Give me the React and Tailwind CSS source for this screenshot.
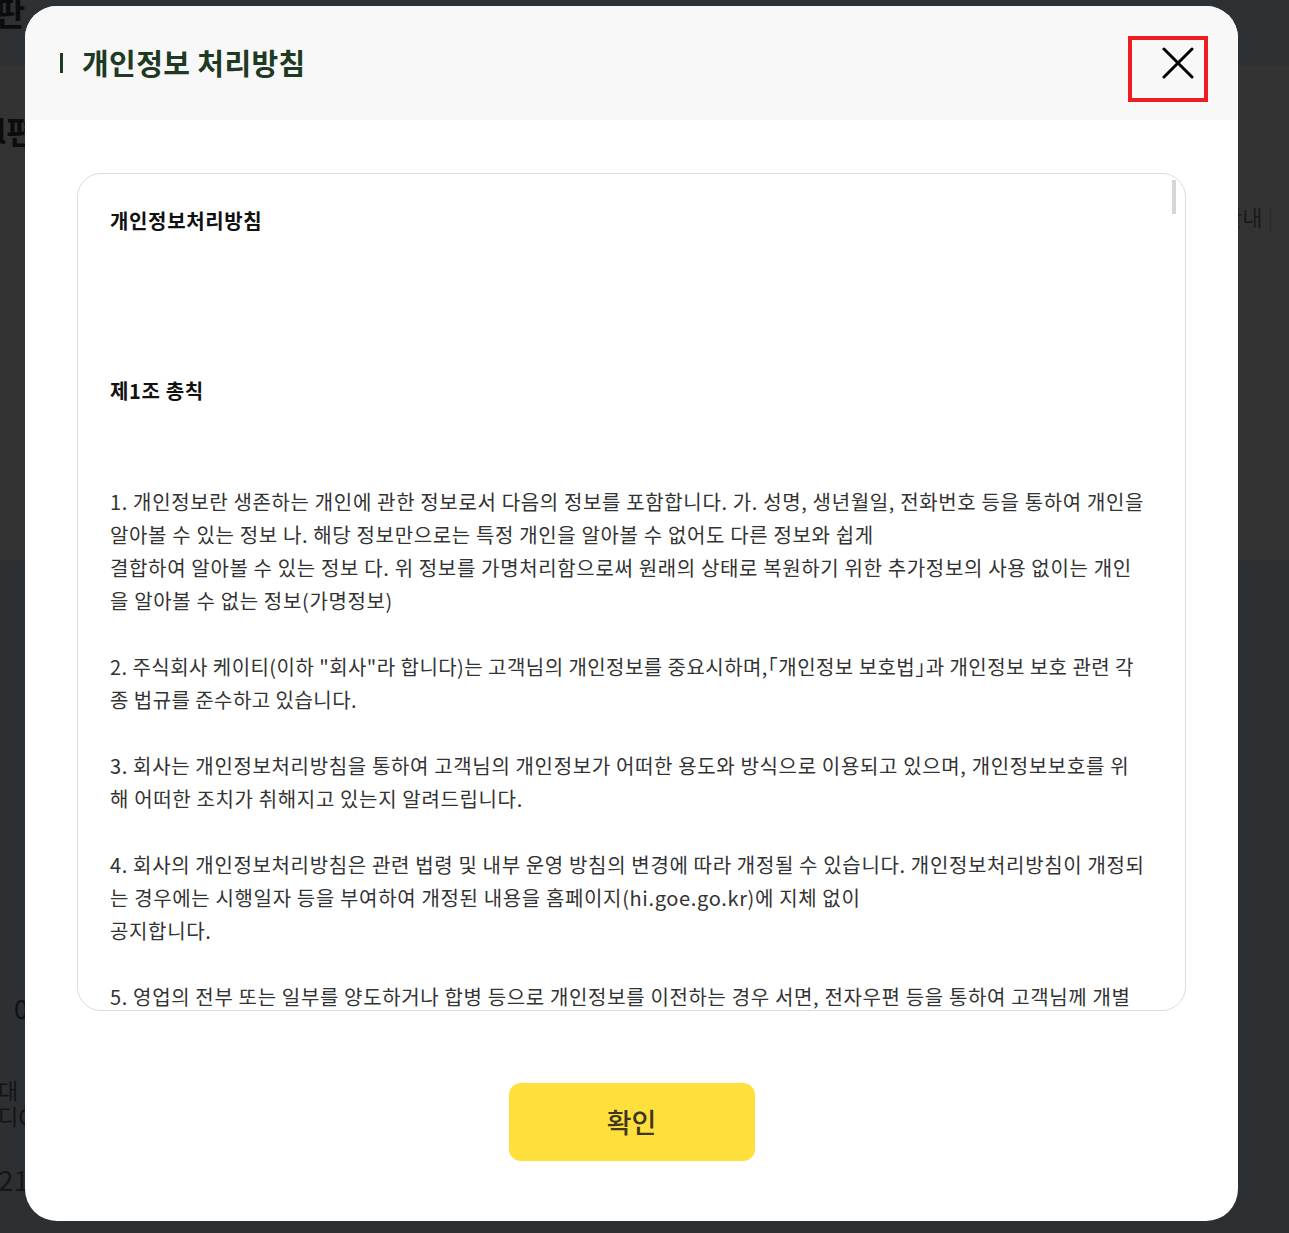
import React from 'react';

const FONT = { fontFamily: '"Noto Sans CJK KR", "Noto Sans", sans-serif' };

function CloseIcon() {
    return (
        <svg width="32" height="32" viewBox="0 0 32 32" fill="none" stroke="#000" strokeWidth="3" strokeLinecap="round">
            <path d="M2 2 L30 30" />
            <path d="M30 2 L2 30" />
        </svg>
    );
}

export default function App() {
    return (
        <div className="relative w-full h-[1233px] overflow-hidden text-[#111]" style={FONT}>
            {/* dimmed page behind the modal */}
            <div className="flex flex-col h-full">
                <div className="h-[66px] bg-[#2d3134]"></div>
                <div className="h-[494px] bg-[#333333]"></div>
                <div className="flex-1 bg-[#2d3033]"></div>
            </div>
            <span className="absolute left-[-6px] top-[-14px] text-[34px] font-bold text-[#0c0c0c]">판</span>
            <span className="absolute left-[-4px] top-[106px] text-[32px] font-bold text-[#0c0c0c]">l편</span>
            <span className="absolute left-[1222px] top-[200px] text-[22px] text-[#1a1a1a]">안내 <span className="text-[#2a2a2a]">|</span></span>
            <span className="absolute left-[14px] top-[988px] text-[26px] text-[#111]">0</span>
            <span className="absolute left-[-2px] top-[1076px] text-[22px] leading-[26px] text-[#141414]">대<br />디O</span>
            <span className="absolute left-[-2px] top-[1158px] text-[28px] text-[#161616]">21</span>

            {/* modal */}
            <div className="absolute left-[25px] top-[6px] w-[1213px] h-[1215px] bg-white rounded-[32px] overflow-hidden flex flex-col">
                <div className="h-[114px] bg-[#f8f8f8] flex items-start justify-between pl-[35px] pr-[30px] shrink-0">
                    <div className="flex items-center h-[114px]">
                        <span className="w-[3px] h-[20px] bg-[#1e3a22] mr-[19px]"></span>
                        <h1 className="text-[29px] font-bold text-[#1e3a22] tracking-[0.4px]">개인정보 처리방침</h1>
                    </div>
                    <button className="mt-[30px] w-[80px] h-[66px] border-[4px] border-[#ee1c25] flex items-start pl-[30px] pt-[7px]">
                        <CloseIcon />
                    </button>
                </div>

                <div className="flex-1 flex flex-col items-center pt-[53px]">
                    <div className="relative w-[1109px] h-[838px] border border-[#dddddd] rounded-[24px] overflow-hidden pt-[30px] pl-[32px]">
                        <div className="absolute right-[9px] top-[6px] w-[4px] h-[34px] bg-[#d6d6d6]"></div>
                        <div className="w-[1035px] tracking-[0.65px]">
                            <p className="text-[20px] leading-[33px] font-bold text-[#111]">개인정보처리방침</p>
                            <p className="mt-[137px] text-[20px] leading-[33px] font-bold text-[#111]">제1조 총칙</p>
                            <p className="mt-[78px] text-[20px] leading-[33px] text-[#333]">
                                1. 개인정보란 생존하는 개인에 관한 정보로서 다음의 정보를 포함합니다. 가. 성명, 생년월일, 전화번호 등을 통하여 개인을 알아볼 수 있는 정보 나. 해당 정보만으로는 특정 개인을 알아볼 수 없어도 다른 정보와 쉽게
                                <br />
                                결합하여 알아볼 수 있는 정보 다. 위 정보를 가명처리함으로써 원래의 상태로 복원하기 위한 추가정보의 사용 없이는 개인을 알아볼 수 없는 정보(가명정보)
                                <br />
                                <br />
                                <span className="tracking-[0.45px]">
                                    2. 주식회사 케이티(이하 "회사"라 합니다)는 고객님의 개인정보를 중요시하며,<span className="[font-feature-settings:'halt']">「</span>개인정보 보호법<span className="[font-feature-settings:'halt']">」</span>과 개인정보 보호 관련 각종 법규를 준수하고 있습니다.
                                </span>
                                <br />
                                <br />
                                3. 회사는 개인정보처리방침을 통하여 고객님의 개인정보가 어떠한 용도와 방식으로 이용되고 있으며, 개인정보보호를 위해 어떠한 조치가 취해지고 있는지 알려드립니다.
                                <br />
                                <br />
                                4. 회사의 개인정보처리방침은 관련 법령 및 내부 운영 방침의 변경에 따라 개정될 수 있습니다. 개인정보처리방침이 개정되는 경우에는 시행일자 등을 부여하여 개정된 내용을 홈페이지(hi.goe.go.kr)에 지체 없이
                                <br />
                                공지합니다.
                                <br />
                                <br />
                                5. 영업의 전부 또는 일부를 양도하거나 합병 등으로 개인정보를 이전하는 경우 서면, 전자우편 등을 통하여 고객님께 개별적으로 통지합니다.
                            </p>
                        </div>
                    </div>

                    <button className="mt-[72px] w-[246px] h-[78px] rounded-[12px] bg-[#ffdf3c] text-[27px] font-medium text-[#3d3620]">
                        확인
                    </button>
                </div>
            </div>
        </div>
    );
}
